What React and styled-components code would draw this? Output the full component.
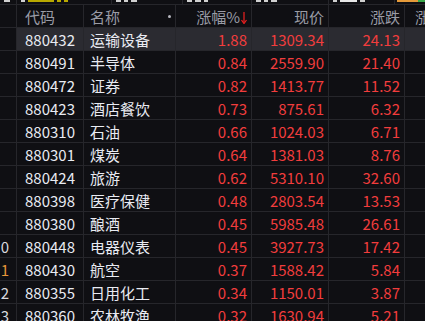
import React from 'react';
import styled, { createGlobalStyle } from 'styled-components';

const Global = createGlobalStyle`
  html, body { margin: 0; padding: 0; background: #0f0f13; overflow: hidden; }
  body { font-family: "Noto Sans CJK SC", "Noto Sans", sans-serif; }
`;

const cols = '17px 67px 92px 76px 77px 76px 1fr';
const line = '#26262b';

const Page = styled.div`
  width: 425px;
  height: 321px;
  background: #0f0f13;
  overflow: hidden;
`;

const Strip = styled.div`
  display: grid;
  grid-template-columns: 17px 95px 71px 69px 77px 66px 1fr;
  height: 5px;
  border-bottom: 1px solid ${line};
  box-sizing: border-box;
`;

const StripCell = styled.div`
  border-right: 1px solid ${line};
  display: flex;
  align-items: flex-start;
  gap: 3px;
  padding: 0 4px;
`;

const Frag = styled.span`
  display: block;
  height: 2px;
  width: ${p => p.w}px;
  margin-left: ${p => p.ml || 0}px;
  background: ${p => p.c};
`;

const Row = styled.div`
  display: grid;
  grid-template-columns: ${cols};
  height: 23px;
  border-bottom: 1px solid ${line};
  box-sizing: border-box;
  background: ${p => (p.active ? '#2b2b31' : 'transparent')};
`;

const Cell = styled.div`
  border-right: 1px solid ${line};
  display: flex;
  align-items: center;
  justify-content: ${p => (p.right ? 'flex-end' : 'flex-start')};
  padding: ${p => (p.right ? '0 4px 0 0' : p.pl ? `0 0 0 ${p.pl}px` : '0')};
  font-size: 15px;
  line-height: 1;
  color: ${p => p.color || '#e9ebf2'};
  white-space: nowrap;
  overflow: hidden;
  background: ${p => p.bg || 'transparent'};
`;

const Side = styled(Cell)`
  background: #0f0f13;
  justify-content: flex-end;
  padding: 0 7px 0 0;
  color: ${p => p.color || '#d8d8de'};
`;

const Head = styled(Cell)`
  color: #9a9ca6;
  position: relative;
`;

const Dot = styled.span`
  position: absolute;
  right: 4px;
  top: 10px;
  width: 3px;
  height: 3px;
  border-radius: 50%;
  background: #b8b8c0;
`;

const Arrow = styled.svg`
  margin-left: 1px;
  margin-top: 4px;
`;

const red = '#f23d3d';

const data = [
  ['880432', '运输设备', '1.88', '1309.34', '24.13'],
  ['880491', '半导体', '0.84', '2559.90', '21.40'],
  ['880472', '证券', '0.82', '1413.77', '11.52'],
  ['880423', '酒店餐饮', '0.73', '875.61', '6.32'],
  ['880310', '石油', '0.66', '1024.03', '6.71'],
  ['880301', '煤炭', '0.64', '1381.03', '8.76'],
  ['880424', '旅游', '0.62', '5310.10', '32.60'],
  ['880398', '医疗保健', '0.48', '2803.54', '13.53'],
  ['880380', '酿酒', '0.45', '5985.48', '26.61'],
  ['880448', '电器仪表', '0.45', '3927.73', '17.42'],
  ['880430', '航空', '0.37', '1588.42', '5.84'],
  ['880355', '日用化工', '0.34', '1150.01', '3.87'],
  ['880360', '农林牧渔', '0.32', '1630.94', '5.21'],
];

const sideText = ['', '', '', '', '', '', '', '', '', '0', '1', '2', '3'];

export default function App() {
  return (
    <Page>
      <Global />
      <Strip>
        <StripCell><Frag w={6} c="#d0d0d0" /></StripCell>
        <StripCell><Frag w={4} c="#d0d0d0" /><Frag w={26} c="#b8a800" /><Frag w={4} c="#b8a800" /><Frag w={4} c="#b8a800" /></StripCell>
        <StripCell><Frag w={5} c="#d0d0d0" /><Frag w={4} c="#d0d0d0" /><Frag w={6} c="#d0d0d0" /></StripCell>
        <StripCell><Frag w={5} c="#d0d0d0" /><Frag w={6} c="#d0d0d0" /><Frag w={4} c="#d0d0d0" /></StripCell>
        <StripCell><Frag w={5} c="#d0d0d0" /><Frag w={4} c="#d0d0d0" /><Frag w={6} c="#d0d0d0" /></StripCell>
        <StripCell><Frag w={4} c="#d0d0d0" /><Frag w={17} c="#e8e8e8" /><Frag w={5} c="#d0d0d0" /></StripCell>
        <StripCell style={{ padding: 0, border: 0 }}><Frag w={21} c="#e59a3a" ml={2} /><Frag w={7} c="#3aa84a" ml={-3} /></StripCell>
      </Strip>
      <Row>
        <Side />
        <Head pl={8}>代码</Head>
        <Head pl={6}>名称<Dot /></Head>
        <Head right>
          涨幅%
          <Arrow width="6" height="12" viewBox="0 0 6 12">
            <path d="M3 0 V10" stroke="#f02020" strokeWidth="1.2" />
            <path d="M0.5 8 L3 11.5 L5.5 8" fill="none" stroke="#f02020" strokeWidth="1.2" />
          </Arrow>
        </Head>
        <Head right>现价</Head>
        <Head right>涨跌</Head>
        <Head pl={10} style={{ borderRight: 0 }}>涨</Head>
      </Row>
      {data.map((r, i) => (
        <Row key={r[0]} active={i === 0}>
          <Side color={i === 10 ? '#e8963a' : undefined}>{sideText[i]}</Side>
          <Cell pl={8}>{r[0]}</Cell>
          <Cell pl={6}>{r[1]}</Cell>
          <Cell right color={red}>{r[2]}</Cell>
          <Cell right color={red}>{r[3]}</Cell>
          <Cell right color={red}>{r[4]}</Cell>
          <Cell style={{ borderRight: 0 }} />
        </Row>
      ))}
    </Page>
  );
}
